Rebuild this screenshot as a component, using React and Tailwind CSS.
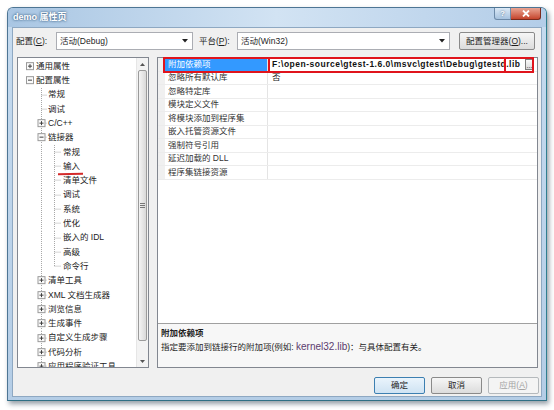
import React from "react";

const ROW = 14.3;

const treeItems = [
  { t: "通用属性", lv: 0, btn: "+" },
  { t: "配置属性", lv: 0, btn: "-" },
  { t: "常规", lv: 1 },
  { t: "调试", lv: 1 },
  { t: "C/C++", lv: 1, btn: "+" },
  { t: "链接器", lv: 1, btn: "-" },
  { t: "常规", lv: 2 },
  { t: "输入", lv: 2, mark: true },
  { t: "清单文件", lv: 2 },
  { t: "调试", lv: 2 },
  { t: "系统", lv: 2 },
  { t: "优化", lv: 2 },
  { t: "嵌入的 IDL", lv: 2 },
  { t: "高级", lv: 2 },
  { t: "命令行", lv: 2, last: true },
  { t: "清单工具", lv: 1, btn: "+" },
  { t: "XML 文档生成器", lv: 1, btn: "+" },
  { t: "浏览信息", lv: 1, btn: "+" },
  { t: "生成事件", lv: 1, btn: "+" },
  { t: "自定义生成步骤", lv: 1, btn: "+" },
  { t: "代码分析", lv: 1, btn: "+" },
  { t: "应用程序验证工具", lv: 1, btn: "+" },
];

const props = [
  ["附加依赖项", ""],
  ["忽略所有默认库", "否"],
  ["忽略特定库", ""],
  ["模块定义文件", ""],
  ["将模块添加到程序集", ""],
  ["嵌入托管资源文件", ""],
  ["强制符号引用", ""],
  ["延迟加载的 DLL", ""],
  ["程序集链接资源", ""],
];

// expand / collapse box of the tree
const PlusBox = ({ cx, cy, sign }) => (
  <g>
    <rect x={cx - 3.5} y={cy - 3.5} width="7" height="7" fill="#fafafa" stroke="#9a9a9a" strokeWidth="1" />
    <line x1={cx - 2} y1={cy} x2={cx + 2} y2={cy} stroke="#404040" strokeWidth="1" />
    {sign === "+" && <line x1={cx} y1={cy - 2} x2={cx} y2={cy + 2} stroke="#404040" strokeWidth="1" />}
  </g>
);

const TreeGlyph = ({ lv, btn, last }) => {
  const w = lv === 0 ? 18 : lv === 1 ? 30 : 45;
  const mid = ROW / 2;
  const dot = { stroke: "#a8a8a8", strokeWidth: 1, strokeDasharray: "1 1" };
  return (
    <svg width={w} height={ROW} className="shrink-0">
      {lv >= 1 && <line x1="23.5" y1="0" x2="23.5" y2={ROW} {...dot} />}
      {lv === 1 && <line x1="23.5" y1={mid} x2="29" y2={mid} {...dot} />}
      {lv === 2 && <line x1="36.5" y1="0" x2="36.5" y2={last ? mid : ROW} {...dot} />}
      {lv === 2 && <line x1="36.5" y1={mid} x2="43" y2={mid} {...dot} />}
      {lv === 0 && btn && <PlusBox cx={12} cy={mid} sign={btn} />}
      {lv === 1 && btn && <PlusBox cx={23.5} cy={mid} sign={btn} />}
    </svg>
  );
};

const Combo = ({ text, w }) => (
  <div className={`${w} h-[18px] bg-white border border-[#abadb3] flex items-center pl-[3px] pr-[4px]`}>
    <span className="flex-1 text-[8.5px] text-[#1e1e1e]">{text}</span>
    <svg width="6" height="4" viewBox="0 0 6 4">
      <path d="M0 0 L6 0 L3 3.5 Z" fill="#222" />
    </svg>
  </div>
);

const Btn = ({ children, def, disabled, w = "w-[51px]" }) => (
  <div
    className={`${w} h-[17px] rounded-[2px] border flex items-center justify-center text-[8.5px] ${
      def
        ? "border-[#3c7fb1] bg-gradient-to-b from-[#eaf4fc] to-[#cfe3f3] text-[#1e1e1e]"
        : disabled
        ? "border-[#b5b9bc] bg-[#f4f4f4] text-[#a3a3a3]"
        : "border-[#8a8a8a] bg-gradient-to-b from-[#f6f6f6] to-[#dcdcdc] text-[#1e1e1e]"
    }`}
  >
    {children}
  </div>
);

const ScrollBar = () => (
  <div className="w-[12px] h-full flex flex-col bg-[#f3f3f3] border-l border-[#e6e6e6]">
    <div className="h-[12px] flex items-center justify-center">
      <svg width="5" height="3" viewBox="0 0 5 3"><path d="M0 3 L5 3 L2.5 0 Z" fill="#555" /></svg>
    </div>
    <div className="flex-1 flex px-[1px] pb-[14px]">
      <div className="flex-1 rounded-[2px] border border-[#9b9b9b] bg-gradient-to-r from-[#f4f4f4] to-[#d9d9d9] flex flex-col items-center justify-center gap-[1px]">
        <div className="w-[5px] h-px bg-[#777]" />
        <div className="w-[5px] h-px bg-[#777]" />
        <div className="w-[5px] h-px bg-[#777]" />
      </div>
    </div>
    <div className="h-[12px] flex items-center justify-center">
      <svg width="5" height="3" viewBox="0 0 5 3"><path d="M0 0 L5 0 L2.5 3 Z" fill="#555" /></svg>
    </div>
  </div>
);

export default function App() {
  return (
    <div className="w-[554px] h-[410px] bg-white overflow-hidden font-['Liberation_Sans','Noto_Sans_CJK_SC',sans-serif]">
      <div className="ml-[7px] mt-[7px] w-[540px] h-[394px] rounded-t-[6px] border border-[#4d7594] border-r-[#2f7f90] border-b-[#2f6f84] bg-gradient-to-b from-[#c6dbef] to-[#b4cde6] shadow-[2px_3px_5px_rgba(20,40,60,0.45)] flex flex-col">
        {/* title bar */}
        <div className="h-[19px] flex items-start bg-gradient-to-r from-[#a9c6e3] via-[#d2e3f3] to-[#b3cde8] rounded-t-[5px]">
          <span className="self-center ml-[5px] text-[9px] font-bold text-white [text-shadow:0_0_3px_#4a6f92,0_0_2px_#4a6f92]">
            demo 属性页
          </span>
          <div className="ml-auto mr-[5px] flex">
            <div className="w-[17px] h-[12px] rounded-bl-[3px] border border-t-0 border-[#6d8aa8] bg-gradient-to-b from-[#dce9f6] to-[#a7c3df] flex items-center justify-center text-[8px] font-bold text-white [text-shadow:0_0_2px_#3a5a78]">
              ?
            </div>
            <div className="w-[30px] h-[12px] rounded-br-[3px] border border-t-0 border-l-0 border-[#7a2a1c] bg-gradient-to-b from-[#e9a493] to-[#c4432b] flex items-center justify-center">
              <svg width="8" height="7" viewBox="0 0 8 7">
                <path d="M1 0.5 L7 6.5 M7 0.5 L1 6.5" stroke="#fff" strokeWidth="1.8" />
              </svg>
            </div>
          </div>
        </div>

        {/* client */}
        <div className="mx-[4px] mb-[3px] flex-1 bg-[#f0f0f0] border border-[#8ea8c2] flex flex-col text-[#1e1e1e]">
          {/* configuration row */}
          <div className="mt-[4px] h-[18px] flex items-center pl-[3px] text-[8.5px]">
            <span className="w-[40px]">
              配置(<span className="underline">C</span>):
            </span>
            <Combo text="活动(Debug)" w="w-[137px]" />
            <span className="ml-[6px] w-[38px]">
              平台(<span className="underline">P</span>):
            </span>
            <Combo text="活动(Win32)" w="w-[213px]" />
            <div className="ml-[9px] w-[76px] h-[18px] rounded-[2px] border border-[#8a8a8a] bg-gradient-to-b from-[#f6f6f6] to-[#dcdcdc] flex items-center justify-center">
              配置管理器(<span className="underline">O</span>)...
            </div>
          </div>

          {/* main */}
          <div className="mt-[7px] h-[311px] flex pl-[4px]">
            {/* tree */}
            <div className="w-[132px] h-full bg-white border border-[#828790] flex overflow-hidden">
              <div className="flex-1 overflow-hidden pt-[1px]">
                {treeItems.map((it, i) => (
                  <div key={i} className="relative h-[14.3px] flex items-center text-[8.5px] text-[#222] whitespace-nowrap">
                    <TreeGlyph lv={it.lv} btn={it.btn} last={it.last} />
                    <span>{it.t}</span>
                    {it.mark && <div className="absolute left-[40px] bottom-[-1px] w-[25px] h-[1.5px] bg-[#d42a2a] rotate-[-1deg]" />}
                  </div>
                ))}
              </div>
              <ScrollBar />
            </div>

            {/* property grid */}
            <div className="ml-[8px] w-[381px] h-full bg-white border border-[#828790] flex flex-col">
              <div className="relative flex-1">
                {props.map(([name, val], i) => (
                  <div key={i} className="h-[13.5px] flex text-[8.5px] border-b border-[#ececec]">
                    <div className="w-[7px] bg-[#f0f0f0]" />
                    <div
                      className={`w-[103px] pl-[3px] flex items-center border-r border-[#e4e4e4] ${
                        i === 0 ? "bg-[#3399ff] text-white" : "text-[#333]"
                      }`}
                    >
                      {name}
                    </div>
                    <div className="flex-1 pl-[4px] flex items-center">
                      {i === 0 ? (
                        <>
                          <span className="flex-1 font-bold text-[8.5px] text-[#111] tracking-[0.5px] whitespace-nowrap overflow-hidden">
                            F:\open-source\gtest-1.6.0\msvc\gtest\Debug\gtestd.lib
                          </span>
                          <span className="w-[9px] h-[11px] mr-[3px] border border-[#7d7d7d] bg-gradient-to-b from-[#fafafa] to-[#dadada] text-[7px] text-[#222] leading-[7px] flex items-end justify-center">
                            ...
                          </span>
                        </>
                      ) : (
                        <span className="text-[#222]">{val}</span>
                      )}
                    </div>
                  </div>
                ))}
                {/* red annotation boxes */}
                <div className="absolute left-[5px] top-[-1px] w-[371px] h-[16px] border-2 border-[#e0141c]" />
                <div className="absolute left-[110px] top-[-1px] w-[238px] h-[16px] border-2 border-[#e0141c]" />
              </div>
              {/* description */}
              <div className="h-[44px] border-t border-[#a0a0a0] bg-[#f7f7f7] pl-[3px] pt-[3px] text-[8.5px] leading-[13px]">
                <div className="font-bold">附加依赖项</div>
                <div>
                  指定要添加到链接行的附加项(例如: <span className="text-[10px] text-[#5b3b6e]">kernel32.lib</span>)：与具体配置有关。
                </div>
              </div>
            </div>
          </div>

          {/* buttons */}
          <div className="mt-[9px] h-[17px] flex justify-end gap-[6px] pr-[2px]">
            <Btn def>确定</Btn>
            <Btn>取消</Btn>
            <Btn disabled>
              应用(<span className="underline">A</span>)
            </Btn>
          </div>
        </div>
      </div>
    </div>
  );
}
